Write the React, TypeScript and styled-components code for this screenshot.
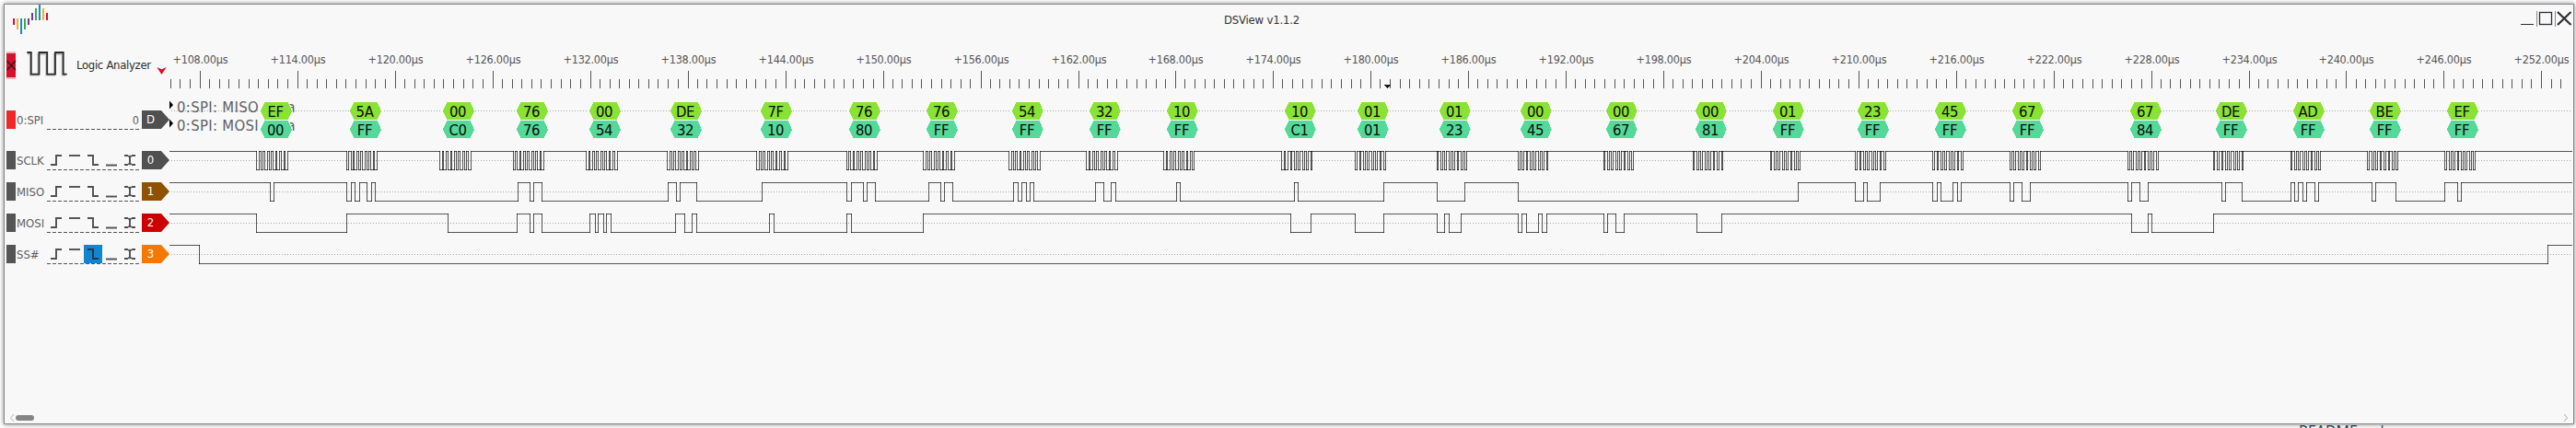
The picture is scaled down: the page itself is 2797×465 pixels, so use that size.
import React from "react";
import styled, { createGlobalStyle } from "styled-components";

const BG = "#f8f8f8";
const LINE = "rgba(0,0,0,.66)";
const FONT = '"DejaVu Sans Condensed", "DejaVu Sans", Tahoma, sans-serif';

const GlobalStyle = createGlobalStyle`
  html, body, #root { height: 100%; }
  body { margin: 0; background: #fff; overflow: hidden; font-family: ${FONT}; }
  svg { display: block; flex: none; }
`;

const Desktop = styled.div`
  height: 465px;
  width: 2797px;
  display: flex;
  flex-direction: column;
  padding: 4px 2px 0 4px;
  box-sizing: border-box;
  overflow: hidden;
`;

const Window = styled.main`
  flex: none;
  height: 457px;
  box-sizing: border-box;
  border: 1px solid #868686;
  background: ${BG};
  box-shadow: 0 0 5px rgba(0, 0, 0, 0.5);
  display: flex;
  flex-direction: column;
`;

const TitleBar = styled.header`
  height: 46px;
  display: grid;
  grid-template-columns: 1fr auto 1fr;
`;

const Title = styled.h1`
  margin: 9px 0 0 -58px;
  font-size: 13px;
  line-height: 16px;
  font-weight: 400;
  color: #333;
  white-space: nowrap;
  letter-spacing: -0.2px;
  width: 83px;
  justify-self: center;
`;

const Controls = styled.div`
  justify-self: end;
`;

const Row = styled.section<{ $height: number }>`
  display: flex;
  height: ${(p) => p.$height}px;
`;

const Side = styled.div<{ $top: number }>`
  width: 179px;
  flex: none;
  box-sizing: border-box;
  padding: ${(p) => p.$top}px 0 0 2px;
  display: flex;
  align-items: flex-start;
`;

const DeviceName = styled.span`
  margin: 7px 4px 0 9px;
  width: 83px;
  font-size: 13px;
  line-height: 16px;
  letter-spacing: -0.31px;
  color: #2e2e2e;
  white-space: nowrap;
`;

const Swatch = styled.span<{ $color: string }>`
  width: 10px;
  height: 20px;
  background: ${(p) => p.$color};
`;

const Name = styled.span`
  width: 31px;
  margin-left: 1px;
  height: 20px;
  line-height: 21px;
  font-size: 13px;
  color: #606060;
  overflow: hidden;
  white-space: nowrap;
`;

const Settings = styled.div`
  width: 100px;
  height: 20px;
  margin: 0 3px 0 2px;
  display: flex;
  justify-content: flex-end;
  line-height: 21px;
  font-size: 12.5px;
  color: #606060;
  padding-bottom: 1px;
  background: repeating-linear-gradient(90deg, #555 0 4px, transparent 4px 6px) bottom / 100% 1px no-repeat;
`;

const TriggerCell = styled.span<{ $active: boolean }>`
  width: 20px;
  height: 20px;
  background: ${(p) => (p.$active ? "#1185d1" : "transparent")};
`;

const Tag = styled.span<{ $color: string }>`
  width: 30px;
  height: 20px;
  box-sizing: border-box;
  padding-right: 11px;
  background: ${(p) => p.$color};
  clip-path: polygon(0 0, 21px 0, 100% 50%, 21px 100%, 0 100%);
  color: #fff;
  font-size: 13px;
  line-height: 20px;
  text-align: center;
`;

const ScrollBar = styled.footer`
  margin-top: auto;
  height: 12px;
  padding: 0 5px 0 5px;
  display: flex;
  align-items: center;
`;

const Thumb = styled.span`
  width: 20px;
  height: 6px;
  border-radius: 3px;
  background: #858585;
  margin: 0 auto 0 1px;
`;

const Behind = styled.div`
  flex: none;
  height: 3px;
  margin: 1px 0 0 2492px;
  overflow: hidden;
  font-family: "Open Sans", sans-serif;
  font-size: 16px;
  color: #20364e;
  span {
    display: block;
    line-height: 22px;
    margin-top: -5px;
  }
`;

const LOGO: [number, number, string][] = [
  [20, 27, "#d7102c"], [20, 32, "#f7b01c"], [20, 37, "#1c87d4"], [20, 32, "#37ad53"], [20, 27, "#7135a0"],
  [14, 22, "#7135a0"], [9, 22, "#37ad53"], [5, 22, "#1c87d4"], [9, 22, "#f7b01c"], [14, 22, "#d7102c"],
];

const Logo = () => (
  <svg width="60" height="40" viewBox="5 5 60 40">
    {LOGO.map(([top, bottom, color], i) => (
      <rect key={i} x={14 + i * 4} y={top} width="2" height={bottom - top} fill={color} />
    ))}
  </svg>
);

const WindowButtons = () => (
  <svg width="60" height="40" viewBox="2734 5 60 40" fill="none" stroke="#2d2d35">
    <path d="M2737 26.5h14" />
    <path d="M2754.5 12v17M2774.5 12v17" stroke="#8a8a8a" />
    <rect x="2757.5" y="13.5" width="13" height="13" strokeWidth="1.3" />
    <path d="M2777 13l14.5 14M2791.5 13l-14.5 14" strokeWidth="2.2" />
  </svg>
);

const DeviceIcons = () => (
  <svg width="67" height="30" viewBox="7 56 67 30" fill="none">
    <rect x="7" y="56" width="10" height="30" fill="#f3b6be" />
    <rect x="7" y="58" width="10" height="26" fill="#d7102c" />
    <path d="M7.5 66l9.5 10M17 66l-9.5 10" stroke="#2a1a1c" strokeWidth="1.3" />
    <path d="M30 58.6h3v22.7h8.600v-22.700h8.700v22.700h8.700v-22.700h8.800v22.700h3.500" stroke="#b9b9b9" strokeWidth="2.200" />
    <path d="M29.300 57h4.500v23.700h8.700V57h8.700v23.700h8.800V57h8.700v23.700h4" stroke="#2b2b2b" strokeWidth="1.800" />
  </svg>
);

const DropArrow = () => (
  <svg width="12" height="28" viewBox="170 56 12 28">
    <path d="M170.300 73l5.200 2.300 5.200-2.300-5.200 8z" fill="#d7102c" />
  </svg>
);

const TRIGGERS = [
  "M4 15h6V5h6",
  "M4 5h12",
  "M4 5h6v10h6",
  "M4 15.500h12",
  "M4 5h4M12 5h4M4 15h4M12 15h4M10 6v8M8.500 5l1 1.500M11.500 5l-1 1.500M8.500 15l1-1.500M11.500 15l-1-1.500",
];

const Triggers = ({ active }: { active?: number }) => (
  <>
    {TRIGGERS.map((d, i) => (
      <TriggerCell key={i} $active={active === i}>
        <svg width="20" height="20">
          <path d={d} fill="none" stroke={active === i ? "#263845" : "#505050"} strokeWidth="1.900" />
        </svg>
      </TriggerCell>
    ))}
  </>
);

const PLOT_X = 184;
const PLOT_END = 2793;
const PLOT_W = PLOT_END - PLOT_X;

const majors = Array.from({ length: 25 }, (_, i) => ({
  x: Math.floor(217.75 + i * 105.92),
  label: `+${108 + i * 6}.00µs`,
}));
const minors: number[] = [];
for (let k = -3; k <= 242; k++) {
  if (k % 10 !== 0) minors.push(Math.floor(217.1 + k * 10.593));
}

const Ruler = () => (
  <svg width={PLOT_W} height="50" viewBox={`${PLOT_X} 51 ${PLOT_W} 50`}>
    <path
      d={minors.map((x) => `M${x + 0.5} 86v10`).join("") + majors.map((m) => `M${m.x + 0.5} 77v19`).join("")}
      stroke="#555"
    />
    <g fontFamily={FONT} fontSize="12.5" fill="#555">
      {majors.map((m) => (
        <text key={m.x} x={m.x - 29.5} y="69" textLength="60">
          {m.label}
        </text>
      ))}
    </g>
    <path d="M1503 92h7v1h-1v1h-1v1h-1v1h-1v-1h-1v-1h-1v-1h-1z" fill="#1c1c1c" />
  </svg>
);

const WORDS: [number, string, string][] = [
  [283, "EF", "00"], [380, "5A", "FF"], [481, "00", "C0"], [561, "76", "76"], [640, "00", "54"],
  [728, "DE", "32"], [826, "7F", "10"], [922, "76", "80"], [1006, "76", "FF"], [1099, "54", "FF"],
  [1183, "32", "FF"], [1267, "10", "FF"], [1395, "10", "C1"], [1474, "01", "01"], [1563, "01", "23"],
  [1651, "00", "45"], [1744, "00", "67"], [1841, "00", "81"], [1925, "01", "FF"], [2017, "23", "FF"],
  [2101, "45", "FF"], [2185, "67", "FF"], [2313, "67", "84"], [2406, "DE", "FF"], [2490, "AD", "FF"],
  [2573, "BE", "FF"], [2657, "EF", "FF"],
];

const hexagon = (x: number, y: number) =>
  `M${x} ${y + 9.5}l4.700-9.500h24.600l4.700 9.500-4.700 9.500h-24.600z`;

const Decoder = () => (
  <svg width={PLOT_W} height="56" viewBox={`${PLOT_X} 101 ${PLOT_W} 56`}>
    <path d={`M${PLOT_X + 2} 120.500H${PLOT_END}`} stroke="#a4a4a4" strokeDasharray="1 2" />
    <path d="M184 109.500l4 4.500-4 4.500zM184 129.500l4 4.500-4 4.500z" fill="#000" />
    <g fontFamily={FONT} fontSize="16.500" fill="#606060">
      <text x="192" y="122" textLength="128.500">0:SPI: MISO data</text>
      <text x="192" y="142" textLength="128.500">0:SPI: MOSI data</text>
    </g>
    {WORDS.map(([x, miso, mosi]) => (
      <g key={x} fontFamily={FONT} fontSize="16.500" fill="#0a0a0a" textAnchor="middle">
        <path d={hexagon(x, 111) + hexagon(x, 131)} fill={BG} stroke={BG} strokeWidth="2" />
        <path d={hexagon(x, 111)} fill="#8ae234" shapeRendering="crispEdges" />
        <path d={hexagon(x, 131)} fill="#55d998" shapeRendering="crispEdges" />
        <text x={x + 16} y="127" letterSpacing="-0.4">{miso}</text>
        <text x={x + 16} y="147" letterSpacing="-0.4">{mosi}</text>
      </g>
    ))}
  </svg>
);

interface Channel {
  name: string;
  color: string;
  edges: number[];
  trigger?: number;
}

const CHANNELS: Channel[] = [
  {
    name: "SCLK",
    color: "#505050",
    edges: [
      278, 281, 283, 285, 287, 290, 292, 294, 296, 299, 300, 303, 305, 308, 309, 312,
      376, 378, 381, 383, 384, 387, 389, 391, 393, 396, 398, 400, 402, 405, 406, 409,
      477, 480, 481, 484, 486, 489, 490, 493, 495, 497, 499, 502, 504, 506, 508, 511,
      557, 559, 561, 564, 565, 568, 570, 572, 574, 577, 579, 581, 583, 586, 587, 590,
      636, 639, 640, 643, 645, 647, 649, 652, 654, 656, 658, 661, 662, 665, 667, 670,
      724, 727, 729, 731, 733, 736, 738, 740, 742, 745, 746, 749, 751, 753, 755, 758,
      821, 824, 826, 828, 830, 833, 835, 837, 839, 842, 843, 846, 848, 851, 852, 855,
      919, 921, 923, 926, 927, 930, 932, 934, 936, 939, 941, 943, 945, 948, 949, 952,
      1002, 1005, 1007, 1009, 1011, 1014, 1016, 1018, 1020, 1023, 1024, 1027, 1029, 1032, 1033, 1036,
      1095, 1098, 1100, 1102, 1104, 1107, 1108, 1111, 1113, 1115, 1117, 1120, 1122, 1124, 1126, 1129,
      1179, 1182, 1183, 1186, 1188, 1190, 1192, 1195, 1197, 1199, 1201, 1204, 1205, 1208, 1210, 1213,
      1263, 1266, 1267, 1270, 1272, 1274, 1276, 1279, 1281, 1283, 1285, 1288, 1289, 1292, 1294, 1296,
      1391, 1394, 1395, 1398, 1401, 1402, 1405, 1407, 1409, 1411, 1414, 1416, 1418, 1420, 1423, 1424,
      1471, 1473, 1476, 1477, 1480, 1482, 1484, 1486, 1489, 1491, 1493, 1495, 1498, 1499, 1502, 1504,
      1560, 1561, 1564, 1566, 1568, 1570, 1573, 1575, 1577, 1579, 1582, 1583, 1586, 1588, 1590, 1592,
      1648, 1650, 1652, 1654, 1657, 1658, 1661, 1663, 1665, 1667, 1670, 1672, 1674, 1676, 1679, 1680,
      1741, 1742, 1745, 1747, 1749, 1751, 1754, 1756, 1758, 1760, 1763, 1764, 1767, 1769, 1771, 1773,
      1838, 1839, 1842, 1844, 1846, 1848, 1851, 1853, 1855, 1857, 1860, 1861, 1864, 1866, 1869, 1870,
      1922, 1923, 1926, 1928, 1930, 1932, 1935, 1937, 1939, 1941, 1944, 1945, 1948, 1950, 1952, 1954,
      2014, 2016, 2019, 2020, 2023, 2025, 2027, 2029, 2032, 2034, 2036, 2038, 2041, 2042, 2045, 2047,
      2098, 2100, 2103, 2104, 2107, 2109, 2111, 2113, 2116, 2118, 2120, 2122, 2125, 2126, 2129, 2131,
      2182, 2184, 2186, 2188, 2191, 2193, 2195, 2197, 2200, 2201, 2204, 2206, 2208, 2210, 2213, 2215,
      2310, 2312, 2314, 2316, 2319, 2321, 2323, 2325, 2328, 2329, 2332, 2334, 2336, 2338, 2341, 2343,
      2403, 2404, 2407, 2409, 2412, 2413, 2416, 2418, 2420, 2422, 2425, 2427, 2429, 2431, 2434, 2435,
      2487, 2488, 2491, 2493, 2495, 2497, 2500, 2502, 2504, 2506, 2509, 2510, 2513, 2515, 2517, 2519,
      2570, 2572, 2575, 2577, 2579, 2581, 2584, 2585, 2588, 2590, 2593, 2594, 2597, 2599, 2601, 2603,
      2654, 2656, 2659, 2661, 2663, 2665, 2668, 2669, 2672, 2674, 2676, 2678, 2681, 2683, 2685, 2687,
    ],
  },
  {
    name: "MISO",
    color: "#8f5202",
    edges: [
      293, 297, 376, 381, 385, 390, 398, 403, 407, 562, 575, 579, 588, 725, 734, 738, 756, 827,
      919, 924, 937, 941, 950, 1008, 1021, 1025, 1034, 1100, 1105, 1109, 1114, 1118, 1122, 1189,
      1198, 1206, 1211, 1277, 1281, 1405, 1409, 1502, 1560, 1590, 1648, 1952, 2014, 2023, 2027,
      2041, 2098, 2103, 2107, 2120, 2125, 2129, 2182, 2186, 2195, 2204, 2310, 2314, 2323, 2332,
      2412, 2416, 2434, 2487, 2491, 2495, 2500, 2504, 2513, 2517, 2575, 2579, 2601, 2654, 2668, 2672,
    ],
  },
  {
    name: "MOSI",
    color: "#cc0000",
    edges: [
      278, 376, 486, 561, 575, 579, 588, 640, 646, 649, 655, 658, 663, 733, 743, 751, 756, 835, 840,
      919, 924, 1002, 1401, 1423, 1471, 1502, 1560, 1568, 1573, 1586, 1648, 1652, 1657, 1670, 1674,
      1679, 1741, 1745, 1754, 1763, 1842, 1869, 2314, 2332, 2336, 2403,
    ],
  },
  { name: "SS#", color: "#f57900", edges: [216, 2766], trigger: 2 },
];

const Trace = ({ edges }: { edges: number[] }) => {
  const stops = [PLOT_X, ...edges, PLOT_END - 1];
  const levels = stops
    .slice(0, -1)
    .map((x, i) => `M${x} ${i % 2 ? 27.5 : 7.5}H${stops[i + 1] + 1}`)
    .join("");
  const steps = edges.map((x) => `M${x + 0.5} 7v21`).join("");
  return (
    <svg width={PLOT_W} height="34" viewBox={`${PLOT_X} 0 ${PLOT_W} 34`} fill="none">
      <path d={`M${PLOT_X + 2} 17.500H${PLOT_END}`} stroke="#a4a4a4" strokeDasharray="1 2" />
      <path d={levels} stroke={LINE} />
      <path d={steps} stroke={LINE} />
    </svg>
  );
};

export default function App() {
  return (
    <>
      <GlobalStyle />
      <Desktop>
        <Window>
          <TitleBar>
            <Logo />
            <Title>DSView v1.1.2</Title>
            <Controls>
              <WindowButtons />
            </Controls>
          </TitleBar>
          <Row $height={50}>
            <Side $top={5}>
              <DeviceIcons />
              <DeviceName>Logic Analyzer</DeviceName>
              <DropArrow />
            </Side>
            <Ruler />
          </Row>
          <Row $height={56}>
            <Side $top={19}>
              <Swatch $color="#ef2929" />
              <Name>0:SPI</Name>
              <Settings>0</Settings>
              <Tag $color="#505050">D</Tag>
            </Side>
            <Decoder />
          </Row>
          {CHANNELS.map((c, i) => (
            <Row key={c.name} $height={34}>
              <Side $top={7}>
                <Swatch $color="#555" />
                <Name>{c.name}</Name>
                <Settings>
                  <Triggers active={c.trigger} />
                </Settings>
                <Tag $color={c.color}>{i}</Tag>
              </Side>
              <Trace edges={c.edges} />
            </Row>
          ))}
          <ScrollBar>
            <svg width="6" height="10" fill="none" stroke="#b5b5b5">
              <path d="M5 1L1.500 5 5 9" />
            </svg>
            <Thumb />
            <svg width="6" height="10" fill="none" stroke="#a8a8a8">
              <path d="M1 1l3.500 4L1 9" />
            </svg>
          </ScrollBar>
        </Window>
        <Behind>
          <span>README.md</span>
        </Behind>
      </Desktop>
    </>
  );
}
